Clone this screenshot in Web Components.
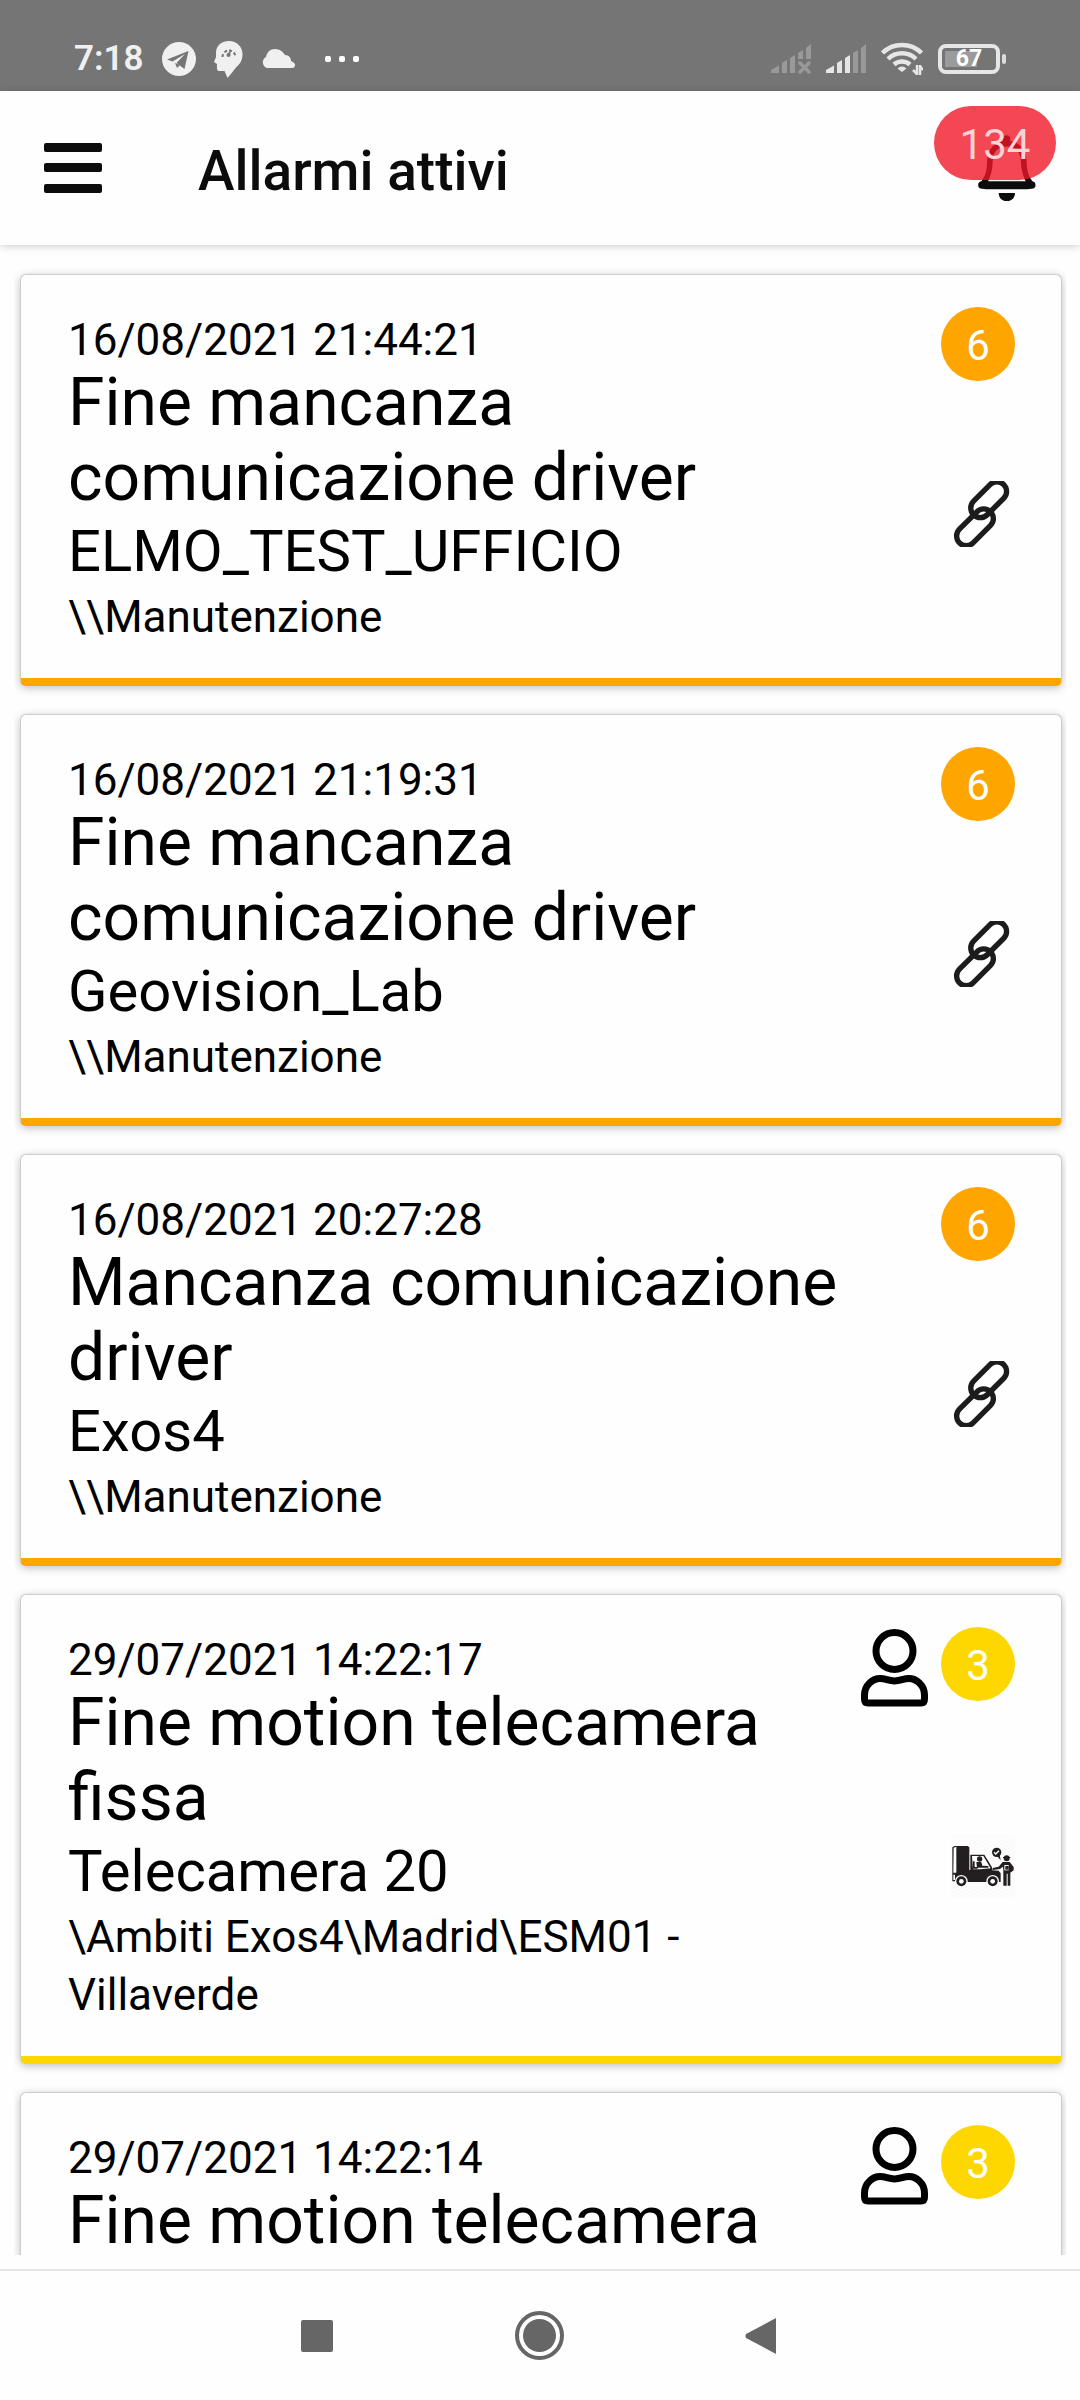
<!DOCTYPE html>
<html lang="it">
<head>
<meta charset="utf-8">
<meta name="viewport" content="width=device-width, initial-scale=1">
<title>Allarmi attivi</title>
<style>
  html, body { height: 100%; }
  body { margin: 0; background: #fefefe; color: #000; font-family: Roboto, "Liberation Sans", sans-serif; }
</style>
</head>
<body>
<alarm-app></alarm-app>
<script>
const make = (name, html) => {
  const tpl = document.createElement('template');
  tpl.innerHTML = '<style>*{box-sizing:border-box}svg{display:block;flex:none}button{border:0;padding:0;background:none;color:inherit;font:inherit}</style>' + html;
  customElements.define(name, class extends HTMLElement {
    constructor() {
      super();
      this.attachShadow({ mode: 'open' }).append(tpl.content.cloneNode(true));
    }
  });
};

make('status-bar', `
<style>
  :host { display: flex; justify-content: space-between; align-items: flex-end; height: 91px; padding: 0 74px 12px 74px; background: #757575; color: #f0f0f0; }
  .side { display: flex; align-items: center; height: 40px; }
  .left { gap: 18px; }
  .right { gap: 15px; }
  time { font-size: 35px; line-height: 40px; font-weight: 600; }
  .dots { margin-left: 12px; }
  .battery { display: flex; align-items: center; }
  .level { display: flex; align-items: center; justify-content: center; width: 62px; height: 30px; border: 4px solid #e6e6e6; border-radius: 8px; color: #fff; font-size: 23px; line-height: 24px; font-weight: 700; background: linear-gradient(#9b9b9b, #9b9b9b) 3px 3px / 32px 16px no-repeat; }
  .tip { width: 4px; height: 10px; margin-left: 2px; border-radius: 2px; background: #dcdcdc; }
</style>
<div class="side left">
  <time>7:18</time>
  <svg width="34" height="34" viewBox="0 0 34 34"><circle cx="17" cy="17" r="17" fill="#f0f0f0"/><path d="M5 17.5 26.5 9 22.5 27 14.5 21 23 12 10.5 19.5Z" fill="#757575"/><path d="m13 21 2 5 3-3Z" fill="#757575"/></svg>
  <svg width="29" height="37" viewBox="0 0 29 37"><path d="M15 0C23 0 28.500 6 28.500 13c0 8-4 11-7 14l-3 4-5 6-3-7H4c-1.500-2-1-4-1-7l-3-2 2-5V12C2 4 8 0 15 0Z" fill="#f0f0f0"/><path d="M8.500 16a6.500 6.500 0 1 1 13 0" fill="none" stroke="#757575" stroke-width="2" stroke-dasharray="3 2"/><path d="m17 8-1 7-3-1Z" fill="#757575"/><circle cx="14.500" cy="14" r="2" fill="#757575"/></svg>
  <svg width="34" height="20" viewBox="0 0 34 20"><path d="M6 19a6 6 0 0 1-1-11C6 3 9 0 14 0c5 0 8 3 10 6 4 0 6 3 6 6 3 1 4 3 4 4a3 3 0 0 1-3 3Z" fill="#f0f0f0"/></svg>
  <svg class="dots" width="35" height="6" viewBox="0 0 35 6" fill="#fff"><rect width="6" height="6" rx="2"/><rect x="14" width="6" height="6" rx="2"/><rect x="28" width="6" height="6" rx="2"/></svg>
</div>
<div class="side right">
  <svg width="40" height="30" viewBox="0 0 40 30" fill="#999"><path d="M0 29v-3l8-4.500V29ZM11 29V19l5-3v13ZM19 29V14l5-3v18ZM27 15V9l5-3v9ZM35 15V4l5-4v15Z"/><path d="m29 19 9 9m0-9-9 9" stroke="#999" stroke-width="3.500" stroke-linecap="round"/></svg>
  <svg width="40" height="30" viewBox="0 0 40 30" fill="#e6e6e6"><path d="M0 29v-3l8-4.500V29ZM11 29V19l5-3v13ZM19 29V14l5-3v18Z"/><path fill="#999" d="M27 29V9l5-3v23ZM35 29V4l5-4v29Z"/></svg>
  <svg width="42" height="34" viewBox="0 0 42 34"><g fill="none" stroke="#e6e6e6" stroke-width="4.500"><path d="M1.500 11a28 28 0 0 1 39 0M7 17a20 20 0 0 1 28 0M13 22.500a12 12 0 0 1 16 0"/></g><path d="M21 30 16.500 26.500q4.500-4 9 0Z" fill="#e6e6e6"/><path d="M36 23v10m0-1-4-4m7 5V23m0 1 3 4" stroke="#e6e6e6" stroke-width="2.500" fill="none"/></svg>
  <div class="battery"><div class="level">67</div><div class="tip"></div></div>
</div>`);

make('app-header', `
<style>
  :host { display: flex; align-items: center; position: relative; z-index: 1; height: 154px; padding: 0 44px; background: #fefefe; box-shadow: 0 1px 8px rgba(0,0,0,.2); color: #0c0c0c; }
  h1 { flex: 1; margin: 0 0 0 96px; padding-top: 6px; font-size: 55px; line-height: 64px; font-weight: 500; }
  .bell { position: relative; }
  .count { position: absolute; right: -20px; bottom: 21px; min-width: 122px; height: 74px; border-radius: 37px; background: rgba(240,22,37,.79); color: #fdd3d8; font-size: 42px; line-height: 78px; text-align: center; }
</style>
<button aria-label="Menu"><svg width="58" height="52" viewBox="0 0 58 52" fill="#0c0c0c"><rect y="1" width="58" height="9" rx="2"/><rect y="21" width="58" height="9" rx="2"/><rect y="42" width="58" height="9" rx="2"/></svg></button>
<h1><slot></slot></h1>
<button class="bell" aria-label="Notifiche"><svg width="58" height="66" viewBox="0 0 174 198"><path d="M86 26C52 26 37 50 36 76c-1 34-6 50-19 68a7 7 0 0 0 6 10H150a7 7 0 0 0 6-10c-13-18-18-34-19-68C136 50 120 26 86 26Z" fill="none" stroke="#0c0c0c" stroke-width="17"/><path d="M12 150H161" stroke="#0c0c0c" stroke-width="23" stroke-linecap="round"/><circle cx="86" cy="12" r="11" fill="#0c0c0c"/><path d="M76 8h20v20H76ZM62 174h49c0 33-49 33-49 0Z" fill="#0c0c0c"/></svg><span class="count">134</span></button>`);

make('link-icon', `
<style>:host { display: block; }</style>
<svg width="66" height="66" viewBox="0 0 198 198" fill="none" stroke="#1c1c1c" stroke-width="16"><rect x="-29" y="-64" width="58" height="128" rx="29" transform="translate(119 56) rotate(45)"/><rect x="-29" y="-66" width="58" height="132" rx="29" transform="translate(78 139) rotate(45)"/></svg>`);

make('truck-icon', `
<style>:host { display: block; }</style>
<svg width="64" height="64" viewBox="0 0 192 192">
  <defs><pattern id="h" width="12" height="12" patternUnits="userSpaceOnUse"><path d="M-3 3 3-3M0 12 12 0M9 15l6-6" stroke="#eee" stroke-width="1.500"/></pattern></defs>
  <rect width="192" height="192" fill="url(#h)"/>
  <g fill="#231f20">
  <path d="M10 36H50l5 4V108H58V62H100L123 100 124 109 143 110 149 118V144H110L44 144 14 142H4V40Z"/>
  <path d="M8 41 16 38V116H7ZM7 122H12V138H7ZM63 66H97L119 103 86 106H66Z" fill="#fff"/>
  <circle cx="86" cy="75" r="8"/><path d="M76 84H91L94 95 112 96V101H78ZM66 82H71V99H80V104H66Z"/>
  <circle cx="31" cy="142" r="19" fill="#fff"/><circle cx="125" cy="142" r="19" fill="#fff"/>
  <circle cx="31" cy="142" r="15"/><circle cx="125" cy="142" r="15"/>
  <circle cx="31" cy="142" r="7" fill="#fff"/><circle cx="125" cy="142" r="7" fill="#fff"/>
  <circle cx="137" cy="55" r="14"/><path d="M138 66 149 79 146 62Z"/><path d="m129 55 5 5 10-10" fill="none" stroke="#fff" stroke-width="4"/>
  <circle cx="167" cy="73" r="9"/><path d="M156 69H178V72H156ZM155 84H176L188 99V109L178 116V155H170V119H167V155H157V106L155 98 147 105 125 108V102L143 98Z"/><path d="M160 93H173V109H160Z" fill="#fff"/><path d="M163 96H173V107H163Z"/>
  </g>
</svg>`);

make('user-icon', `
<style>:host { display: block; }</style>
<svg width="67" height="80" viewBox="0 -2 67 80" fill="none" stroke="#000" stroke-width="7"><circle cx="33.500" cy="22" r="18.500"/><path d="M3.500 70V66C3.500 56 12 49.500 19 49.500 25 49.500 27 52 33.500 52S42 49.500 48 49.500C55 49.500 63.500 56 63.500 66V70Q63.500 74 60 74H7Q3.500 74 3.500 70Z"/></svg>`);

make('alarm-card', `
<style>
  :host { display: block; --level: orange; }
  :host([level="3"]) { --level: #ffd700; }
  article { display: flex; padding: 32px 46px 32px 47px; background: #fefefe; border: 1px solid #ccc; border-bottom: 8px solid var(--level); border-radius: 6px; box-shadow: 0 2px 8px rgba(0,0,0,.25); }
  .text { flex: 1; min-width: 0; padding-top: 8px; font-size: 44px; line-height: 58px; }
  ::slotted(*) { display: block; margin: 0; font-weight: 400; }
  ::slotted(time) { line-height: 50px; }
  ::slotted(h2) { font-size: 66px; line-height: 75px; }
  ::slotted(h3) { font-size: 58px; line-height: 73px; }
  .side { display: flex; flex-direction: column; align-items: flex-end; width: 155px; }
  .top { display: flex; gap: 13px; }
  .badge { width: 74px; height: 74px; border-radius: 50%; background: var(--level); color: #fff; font-size: 42px; line-height: 78px; text-align: center; }
  .kind { flex: 1; display: flex; align-items: center; }
</style>
<article>
  <div class="text"><slot></slot></div>
  <div class="side">
    <div class="top"><slot name="owner"></slot><div class="badge"><slot name="priority"></slot></div></div>
    <div class="kind"><slot name="kind"></slot></div>
  </div>
</article>`);

make('nav-bar', `
<style>
  :host { display: grid; grid-template-columns: repeat(3, 222px); justify-content: center; place-items: center; height: 131px; padding-right: 2px; border-top: 2px solid #e4e4e4; background: #fefefe; }
  button { width: 100px; height: 100px; display: grid; place-items: center; }
</style>
<button aria-label="Recenti"><svg width="32" height="32" viewBox="0 0 32 32"><rect width="32" height="32" rx="2" fill="#666"/></svg></button>
<button aria-label="Home"><svg width="49" height="49" viewBox="0 0 49 49"><circle cx="24.500" cy="24.500" r="22.500" fill="none" stroke="#666" stroke-width="4"/><circle cx="24.500" cy="24.500" r="16.500" fill="#666"/></svg></button>
<button aria-label="Indietro"><svg width="32" height="38" viewBox="0 0 32 38"><path d="M31 1V37L1 21Q0 19 1 17Z" fill="#666"/></svg></button>`);

make('alarm-app', `
<style>
  :host { display: flex; flex-direction: column; height: 100vh; }
  main { flex: 1; min-height: 0; display: grid; grid-auto-rows: max-content; gap: 28px; margin: 0 14px 14px; padding: 29px 4px 0 6px; overflow: hidden; }
</style>
<status-bar></status-bar>
<app-header>Allarmi attivi</app-header>
<main>
  <alarm-card level="6"><time>16/08/2021 21:44:21</time><h2>Fine mancanza comunicazione driver</h2><h3>ELMO_TEST_UFFICIO</h3><p>\\\\Manutenzione</p><span slot="priority">6</span><link-icon slot="kind"></link-icon></alarm-card>
  <alarm-card level="6"><time>16/08/2021 21:19:31</time><h2>Fine mancanza comunicazione driver</h2><h3>Geovision_Lab</h3><p>\\\\Manutenzione</p><span slot="priority">6</span><link-icon slot="kind"></link-icon></alarm-card>
  <alarm-card level="6"><time>16/08/2021 20:27:28</time><h2>Mancanza comunicazione driver</h2><h3>Exos4</h3><p>\\\\Manutenzione</p><span slot="priority">6</span><link-icon slot="kind"></link-icon></alarm-card>
  <alarm-card level="3"><time>29/07/2021 14:22:17</time><h2>Fine motion telecamera fissa</h2><h3>Telecamera 20</h3><p>\\Ambiti Exos4\\Madrid\\ESM01 - Villaverde</p><user-icon slot="owner"></user-icon><span slot="priority">3</span><truck-icon slot="kind"></truck-icon></alarm-card>
  <alarm-card level="3"><time>29/07/2021 14:22:14</time><h2>Fine motion telecamera</h2><user-icon slot="owner"></user-icon><span slot="priority">3</span></alarm-card>
</main>
<nav-bar></nav-bar>`);
</script>
</body>
</html>
